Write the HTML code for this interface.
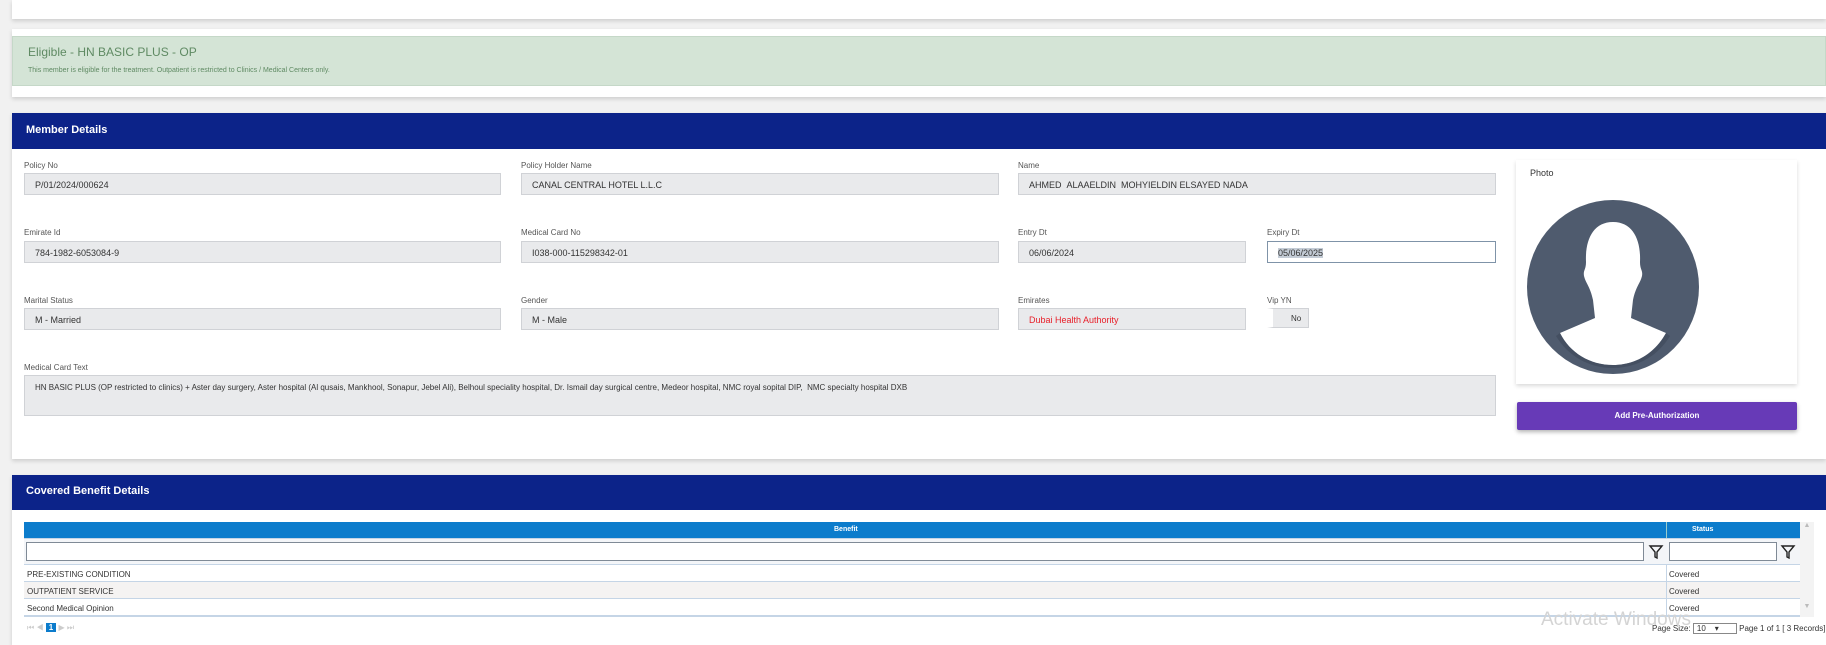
<!DOCTYPE html>
<html><head><meta charset="utf-8"><style>
*{box-sizing:border-box;margin:0;padding:0}
body{width:1826px;height:638px;overflow:hidden;background:#f1f1f1;font-family:"Liberation Sans",sans-serif;font-size:9px;color:#333;position:relative}
.abs{position:absolute}
.card{position:absolute;background:#fff;box-shadow:0 2px 4px rgba(0,0,0,.15)}
.hdr{position:absolute;left:12px;right:0;background:#0c2389;color:#fff;font-weight:bold;font-size:11px;padding-left:14px}
.lbl{position:absolute;font-size:8px;color:#555}
.inp{position:absolute;height:22px;background:#e9eaec;border:1px solid #d0d2d6;font-size:9px;padding:6px 0 0 10px;color:#333}
.row{position:absolute;left:24px;width:1776px;height:17px;border-top:1px solid #c5d5e6;font-size:8px;padding:5px 0 0 3px}
.row span{position:absolute;left:1642px;top:5px;padding-left:3px}
</style></head><body>
<div class="card" style="left:12px;top:0;width:1814px;height:19px"></div>
<div class="card" style="left:12px;top:29px;width:1814px;height:68px"></div>
<div class="abs" style="left:12px;top:36px;width:1814px;height:50px;background:#d4e4d6;border:1px solid #c5d8c8"></div>
<div class="abs" style="left:28px;top:45px;font-size:12px;color:#5f8a63">Eligible - HN BASIC PLUS - OP</div>
<div class="abs" style="left:28px;top:67px;font-size:7px;color:#5f8a63">This member is eligible for the treatment. Outpatient is restricted to Clinics / Medical Centers only.</div>

<div class="card" style="left:12px;top:113px;width:1814px;height:346px"></div>
<div class="hdr" style="top:113px;height:36px;line-height:34px">Member Details</div>

<div class="lbl" style="left:24px;top:161px">Policy No</div>
<div class="inp" style="left:24px;top:173px;width:477px">P/01/2024/000624</div>
<div class="lbl" style="left:521px;top:161px">Policy Holder Name</div>
<div class="inp" style="left:521px;top:173px;width:478px">CANAL CENTRAL HOTEL L.L.C</div>
<div class="lbl" style="left:1018px;top:161px">Name</div>
<div class="inp" style="left:1018px;top:173px;width:478px">AHMED &nbsp;ALAAELDIN &nbsp;MOHYIELDIN ELSAYED NADA</div>

<div class="lbl" style="left:24px;top:228px">Emirate Id</div>
<div class="inp" style="left:24px;top:241px;width:477px">784-1982-6053084-9</div>
<div class="lbl" style="left:521px;top:228px">Medical Card No</div>
<div class="inp" style="left:521px;top:241px;width:478px">I038-000-115298342-01</div>
<div class="lbl" style="left:1018px;top:228px">Entry Dt</div>
<div class="inp" style="left:1018px;top:241px;width:228px">06/06/2024</div>
<div class="lbl" style="left:1267px;top:228px">Expiry Dt</div>
<div class="inp" style="left:1267px;top:241px;width:229px;background:#fff;border-color:#7f93a8"><span style="background:#c4ccd6">05/06/2025</span></div>

<div class="lbl" style="left:24px;top:296px">Marital Status</div>
<div class="inp" style="left:24px;top:308px;width:477px">M - Married</div>
<div class="lbl" style="left:521px;top:296px">Gender</div>
<div class="inp" style="left:521px;top:308px;width:478px">M - Male</div>
<div class="lbl" style="left:1018px;top:296px">Emirates</div>
<div class="inp" style="left:1018px;top:308px;width:228px;color:#e8202a">Dubai Health Authority</div>
<div class="lbl" style="left:1267px;top:296px">Vip YN</div>
<div class="inp" style="left:1267px;top:308px;width:42px;height:20px;padding:5px 0 0 18px;font-size:8px;border-left:6px solid #fff">No</div>

<div class="lbl" style="left:24px;top:363px">Medical Card Text</div>
<div class="inp" style="left:24px;top:375px;width:1472px;height:41px;padding-top:7px;font-size:8px">HN BASIC PLUS (OP restricted to clinics) + Aster day surgery, Aster hospital (Al qusais, Mankhool, Sonapur, Jebel Ali), Belhoul speciality hospital, Dr. Ismail day surgical centre, Medeor hospital, NMC royal sopital DIP, &nbsp;NMC specialty hospital DXB</div>

<div class="card" style="left:1516px;top:160px;width:281px;height:224px"></div>
<div class="abs" style="left:1530px;top:168px;font-size:9px">Photo</div>
<svg class="abs" style="left:1527px;top:200px" width="172" height="174" viewBox="0 0 172 174">
<defs><clipPath id="c"><ellipse cx="86" cy="87" rx="86" ry="87"/></clipPath></defs>
<ellipse cx="86" cy="87" rx="86" ry="87" fill="#4f5b6e"/>
<g clip-path="url(#c)">
<path d="M86 22c-20 0-28 18-27 40 0 8-3 8-2 14 2 8 6 10 9 24l2 18L33 133c10 20 30 32 53 32s42-12 53-32l-35-15 2-18c3-14 7-16 9-24 1-6-2-6-2-14 1-22-7-40-27-40z" fill="#fff"/>
<path d="M33 133c10 20 30 32 53 32s42-12 53-32l4 3c-12 20-33 32-57 32s-45-12-57-32z" fill="#3e4859" opacity=".6"/>
</g></svg>
<div class="abs" style="left:1517px;top:402px;width:280px;height:28px;background:#673ab7;color:#fff;font-size:8px;font-weight:bold;text-align:center;line-height:28px;border-radius:2px;box-shadow:0 2px 4px rgba(0,0,0,.3)">Add Pre-Authorization</div>

<div class="card" style="left:12px;top:475px;width:1814px;height:170px"></div>
<div class="hdr" style="top:475px;height:35px;line-height:33px">Covered Benefit Details</div>
<div class="abs" style="left:24px;top:522px;width:1776px;height:16px;background:#0c7ccc;color:#fff;font-size:7px;font-weight:bold"><span class="abs" style="left:810px;top:4px">Benefit</span><span class="abs" style="left:1668px;top:4px">Status</span><div class="abs" style="left:1642px;top:0;width:1px;height:16px;background:#9cc"></div></div>
<div class="abs" style="left:24px;top:538px;width:1776px;height:26px;background:#f3f5f8;border-top:1px solid #c5d5e6">
<div class="abs" style="left:2px;top:3px;width:1618px;height:19px;background:#fff;border:1px solid #7f8a96"></div>
<div class="abs" style="left:1645px;top:3px;width:108px;height:19px;background:#fff;border:1px solid #7f8a96"></div>
<svg class="abs" style="left:1624px;top:5px" width="16" height="16"><path d="M2 2h12l-5 6v6l-2-1v-5z" fill="none" stroke="#222" stroke-width="1.4"/></svg>
<svg class="abs" style="left:1756px;top:5px" width="16" height="16"><path d="M2 2h12l-5 6v6l-2-1v-5z" fill="none" stroke="#222" stroke-width="1.4"/></svg>
</div>
<div class="row" style="top:564px;background:#fff">PRE-EXISTING CONDITION<span>Covered</span></div>
<div class="row" style="top:581px;background:#f5f3f2">OUTPATIENT SERVICE<span>Covered</span></div>
<div class="row" style="top:598px;background:#fff;height:19px;border-bottom:2px solid #c5d5e6">Second Medical Opinion<span>Covered</span></div>
<div class="abs" style="left:1666px;top:564px;width:1px;height:53px;background:#c5d5e6"></div>
<div class="abs" style="left:1800px;top:522px;width:14px;height:95px;background:#f3f3f3;color:#bbb;font-size:7px;text-align:center">▲<div style="margin-top:74px">▼</div></div>
<div class="abs" style="left:27px;top:623px;font-size:8px;color:#ccc">⏮ ◀ <span style="background:#0c7ccc;color:#fff;font-weight:bold;padding:0 3px">1</span> ▶ ⏭</div>
<div class="abs" style="left:1541px;top:609px;font-size:19px;color:#d4d4d4">Activate Windows</div>
<div class="abs" style="left:1652px;top:623px;font-size:8px;color:#333">Page Size: <span style="display:inline-block;width:44px;border:1px solid #888;padding-left:3px">10 &nbsp;&nbsp;&nbsp;▾</span> Page 1 of 1 [ 3 Records]</div>
</body></html>
